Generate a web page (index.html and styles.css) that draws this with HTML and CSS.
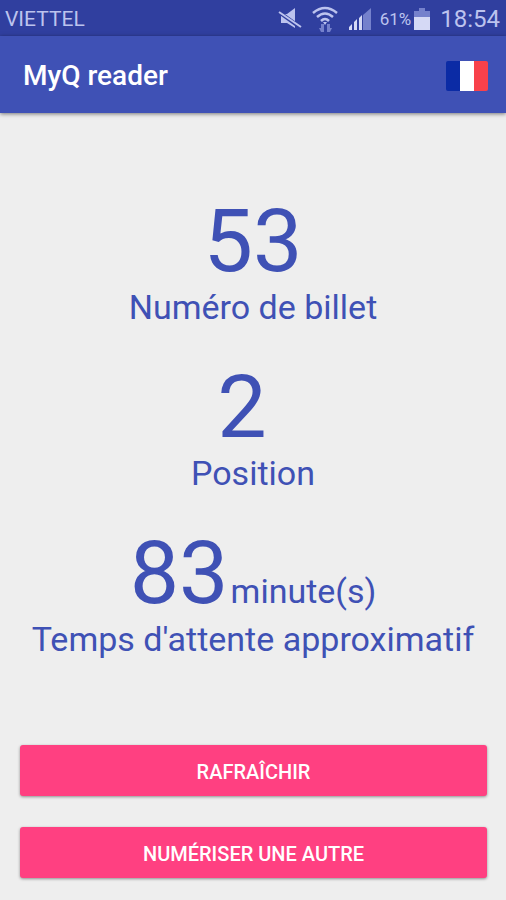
FILE: index.html
```html
<!DOCTYPE html>
<html lang="fr">
  <head>
    <meta charset="utf-8" />
    <meta name="viewport" content="width=device-width, initial-scale=1" />
    <title>MyQ reader</title>
    <link rel="stylesheet" href="styles.css">
  </head>
  <body>
    <div class="status-bar">
      <span class="carrier">VIETTEL</span>
      <svg class="icon-mute" width="24" height="22" viewBox="0 0 24 22">
        <path d="M3 6h6l8-6v20l-8-5H3z" fill="#bcc3ee" />
        <path d="M1 4l22 16" stroke="#303f9f" stroke-width="4" />
        <path d="M1 4l22 15" stroke="#bcc3ee" stroke-width="2" />
      </svg>
      <svg class="icon-wifi" width="26" height="26" viewBox="0 0 26 26">
        <g fill="none" stroke="#bcc3ee" stroke-width="2.500">
          <path d="M1 7q12-10 24 0" />
          <path d="M5 11q8-7 16 0" />
          <path d="M9 15q4-4 8 0" />
        </g>
        <path d="M11 16h4l-2 3z" fill="#bcc3ee" />
        <path d="M9 18h3v8H9l-2-4h2zM15 26v-8h3v4h2l-2 4z" fill="#7581cc" />
      </svg>
      <svg class="icon-signal" width="24" height="22" viewBox="0 0 24 22">
        <path d="M1 22v-3l3-3v6zM6 22v-8l3-3v11zM11 22V10l3-3v15z" fill="#d5d9f5" />
        <path d="M15 22V7l8-7v22z" fill="#7581cc" />
      </svg>
      <span class="battery-level">61%</span>
      <svg class="icon-battery" width="16" height="22" viewBox="0 0 16 22">
        <path d="M0 3h5V0h6v3h5v7H0z" fill="#7581cc" />
        <path d="M0 9h16v13H0z" fill="#d5d9f5" />
      </svg>
      <span class="clock">18:54</span>
    </div>

    <header class="app-bar">
      <h1>MyQ reader</h1>
      <button class="language" aria-label="Français">
        <svg width="42" height="30" viewBox="0 0 42 30">
          <path d="M2 0h12v30H2a2 2 0 0 1-2-2V2a2 2 0 0 1 2-2z" fill="#0b2ba5" />
          <path d="M14 0h14v30H14z" fill="#fff" />
          <path d="M28 0h12a2 2 0 0 1 2 2v26a2 2 0 0 1-2 2H28z" fill="#f8414b" />
        </svg>
      </button>
    </header>

    <main class="ticket">
      <div class="item">
        <div class="number">53</div>
        <div class="label">Numéro de billet</div>
      </div>
      <div class="item">
        <div class="number">2&nbsp;</div>
        <div class="label">Position</div>
      </div>
      <div class="item">
        <div class="number">83<span class="unit">minute(s)</span></div>
        <div class="label">Temps d'attente approximatif</div>
      </div>
    </main>

    <div class="actions">
      <button class="action-button">RAFRAÎCHIR</button>
      <button class="action-button">NUMÉRISER UNE AUTRE</button>
    </div>
  </body>
</html>
```

FILE: styles.css
```css
* {
  box-sizing: border-box;
}
body {
  margin: 0;
  min-height: 100vh;
  display: flex;
  flex-direction: column;
  font-family: Roboto, "Liberation Sans", sans-serif;
  background: #eeeeee;
  color: #3f51b5;
}

/* Status bar */
.status-bar {
  display: flex;
  align-items: center;
  height: 36px;
  padding: 2px 6px 0 5px;
  background: #303f9f;
  color: #bcc3ee;
}
.carrier {
  flex: 1;
  font-size: 21px;
}
.icon-mute {
  margin-right: 10px;
}
.icon-wifi {
  margin-right: 10px;
}
.icon-signal {
  margin-right: 8px;
}
.battery-level {
  margin-right: 3px;
  font-size: 17px;
}
.icon-battery {
  margin-right: 10px;
}
.clock {
  font-size: 24px;
}

/* App bar */
.app-bar {
  display: flex;
  align-items: center;
  justify-content: space-between;
  height: 77px;
  padding: 2px 18px 0 23px;
  background: #3f51b5;
  box-shadow: 0 1px 4px rgba(0,0,0,0.5);
}
.app-bar h1 {
  margin: 0;
  color: #ffffff;
  font-size: 28px;
  font-weight: 500;
}
.language {
  display: flex;
  padding: 0;
  border: none;
  background: none;
  cursor: pointer;
}

/* Ticket details */
.ticket {
  flex: 1;
  display: flex;
  flex-direction: column;
  gap: 34px;
  padding-top: 82px;
  text-align: center;
}
.number {
  font-size: 88px;
  line-height: 92px;
}
.unit {
  margin-left: 2px;
  font-size: 34px;
  line-height: 40px;
}
.label {
  font-size: 34px;
  line-height: 40px;
}

/* Buttons */
.actions {
  display: flex;
  flex-direction: column;
  gap: 31px;
  padding: 20px 19px 22px 20px;
}
.action-button {
  height: 51px;
  padding-top: 3px;
  border: none;
  border-radius: 3px;
  background: #ff4081;
  color: #ffffff;
  font-family: inherit;
  font-size: 20px;
  font-weight: 500;
  box-shadow: 0 1px 3px rgba(0,0,0,0.4);
  cursor: pointer;
}
```
